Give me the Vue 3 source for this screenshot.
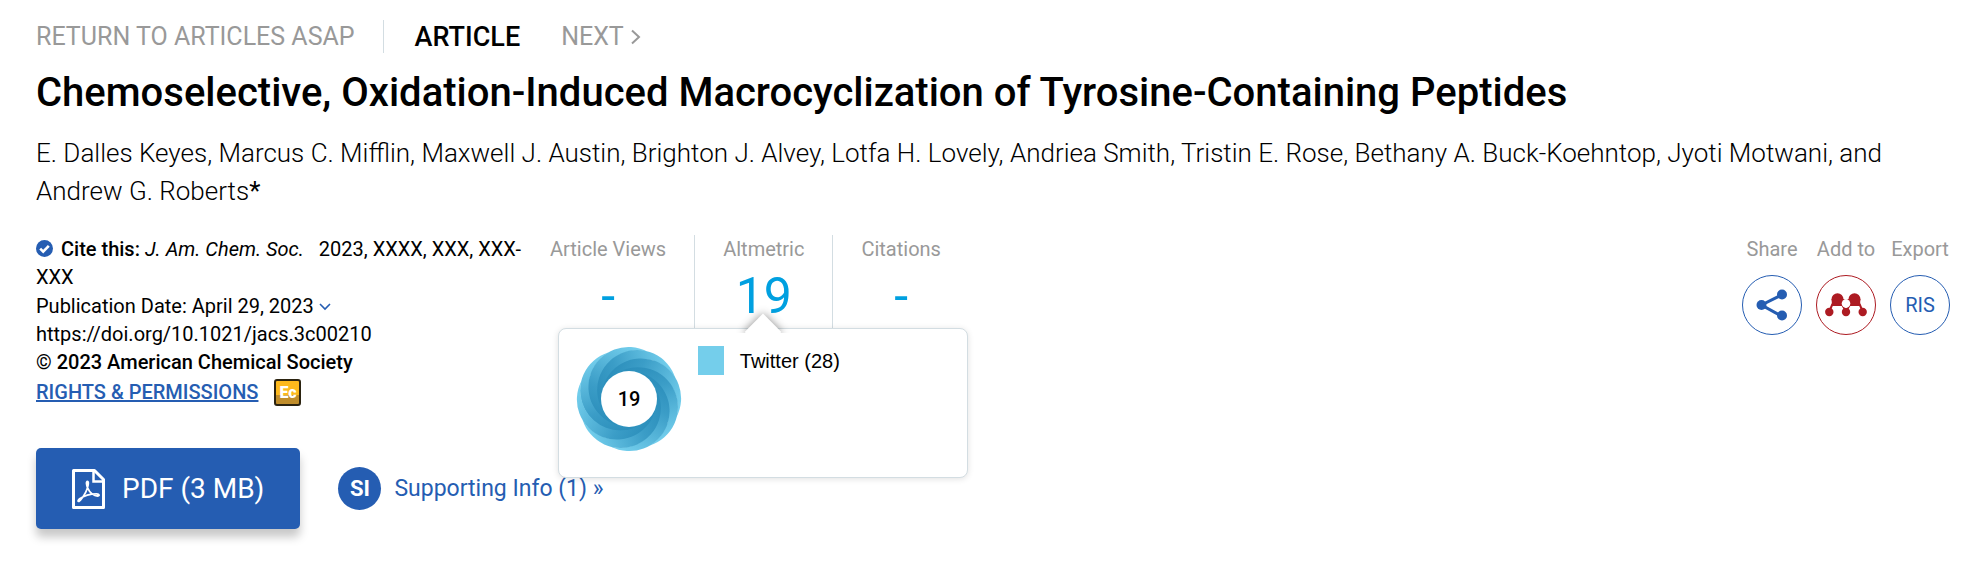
<script setup>
const authors = [
  'E. Dalles Keyes', 'Marcus C. Mifflin', 'Maxwell J. Austin', 'Brighton J. Alvey',
  'Lotfa H. Lovely', 'Andriea Smith', 'Tristin E. Rose', 'Bethany A. Buck-Koehntop',
  'Jyoti Motwani',
]
const petals = Array.from({ length: 8 }, (_, i) => 156 + i * 45)
</script>

<template>
  <main class="article">
    <nav class="crumbs" aria-label="Article navigation">
      <a href="#" class="crumb">RETURN TO ARTICLES ASAP</a>
      <span class="rule"></span>
      <span class="current">ARTICLE</span>
      <a href="#" class="crumb next">NEXT
        <svg width="12" height="16" viewBox="0 0 12 16" fill="none" stroke="currentColor" stroke-width="2" aria-hidden="true"><path d="M2 1.5 9 8l-7 6.5" /></svg>
      </a>
    </nav>

    <h1>Chemoselective, Oxidation-Induced Macrocyclization of Tyrosine-Containing Peptides</h1>

    <p class="authors">{{ authors.join(', ') }}, and Andrew G. Roberts<span class="star">*</span></p>

    <section class="meta">
      <div class="cite">
        <div class="citation">
          <svg class="check" width="17" height="17" viewBox="0 0 17 17" aria-hidden="true">
            <circle cx="8.5" cy="8.5" r="8.5" fill="#255db2" />
            <path d="m4.2 8.6 3 3 5.6-5.8" fill="none" stroke="#fff" stroke-width="2.6" />
          </svg>
          <b>Cite this:</b> <i>J. Am. Chem. Soc.</i> <span class="ref">2023, XXXX, XXX, XXX-XXX</span>
        </div>
        <div>Publication Date: April 29, 2023
          <svg width="12" height="12" viewBox="0 0 12 12" fill="none" stroke="#255db2" stroke-width="1.6" aria-hidden="true"><path d="m1 3 5 5 5-5" /></svg>
        </div>
        <div>https://doi.org/10.1021/jacs.3c00210</div>
        <div><b>© 2023 American Chemical Society</b></div>
        <div class="rights">
          <a href="#">RIGHTS &amp; PERMISSIONS</a>
          <span class="ec">Ec</span>
        </div>
      </div>

      <div class="stats">
        <div class="stat views">
          <span class="label">Article Views</span>
          <span class="value">-</span>
        </div>
        <div class="stat alt">
          <span class="label">Altmetric</span>
          <a href="#" class="value">19</a>
          <div class="popup">
            <span class="arrow"></span>
            <svg class="donut" width="106" height="106" viewBox="-53 -53 106 106" role="img" aria-label="Altmetric score 19">
              <defs>
                <linearGradient id="petal" gradientUnits="userSpaceOnUse" x1="10" y1="-32" x2="0" y2="50">
                  <stop offset="0" stop-color="#2a8dba" />
                  <stop offset="0.35" stop-color="#3b9dc7" />
                  <stop offset="1" stop-color="#74cfed" />
                </linearGradient>
              </defs>
              <circle r="42" fill="#3b9dc7" />
              <path
                v-for="angle in petals" :key="angle" fill="url(#petal)"
                :transform="`rotate(${angle})`"
                d="M0 -28.6A40 40 0 1 1 0 50.8A40 40 0 0 0 0 -28.6Z"
              />
              <circle r="28" fill="#fff" />
              <text x="0" y="7" text-anchor="middle">19</text>
            </svg>
            <div class="source"><span class="swatch"></span>Twitter (28)</div>
          </div>
        </div>
        <div class="stat">
          <span class="label">Citations</span>
          <span class="value">-</span>
        </div>
      </div>

      <div class="actions">
        <div class="action">
          <label for="share" class="label">Share</label>
          <button id="share" type="button" class="round">
            <svg width="32" height="32" viewBox="0 0 32 32" aria-hidden="true">
              <path d="M25.5 6 5.500 16l20 11" fill="none" stroke="#255db2" stroke-width="3" />
              <g fill="#255db2"><circle cx="5.500" cy="16" r="5" /><circle cx="26" cy="5.500" r="5" /><circle cx="26" cy="26.500" r="5" /></g>
            </svg>
          </button>
        </div>
        <div class="action">
          <label for="mendeley" class="label">Add to</label>
          <button id="mendeley" type="button" class="round red">
            <svg width="42" height="24" viewBox="0 0 42 24" aria-hidden="true">
              <g fill="#ad1b22">
                <circle cx="12.500" cy="6.300" r="6" /><circle cx="29.500" cy="6.300" r="6" />
                <path d="M6.800 6h11.500l2.700 1 2.700-1h11.500v7H6.800Z" />
                <path d="M7.500 11 4.500 18M34.500 11l3 7M17 11.500l4 7 4-7" fill="none" stroke="#ad1b22" stroke-width="2" />
                <circle cx="4.300" cy="19" r="4.200" /><circle cx="21" cy="19" r="4.200" /><circle cx="37.700" cy="19" r="4.200" />
              </g>
              <circle cx="21" cy="10.500" r="4.300" fill="#fff" />
            </svg>
          </button>
        </div>
        <div class="action">
          <label for="export" class="label">Export</label>
          <button id="export" type="button" class="round">RIS</button>
        </div>
      </div>
    </section>

    <section class="downloads">
      <button type="button" class="pdf">
        <svg width="33" height="40" viewBox="0 0 33 40" fill="none" stroke="#fff" aria-hidden="true">
          <path d="M1.500 1.500h21l9 9v28h-30Z" stroke-width="3" stroke-linejoin="round" />
          <path d="M21.500 2v10.500h10" stroke-width="2.500" />
          <path d="M15.500 12.500c-1.500 0-1.200 3 .2 6.500 2 5 6.500 8 9.800 8 2.400 0 2-2.200-.8-2.200-6 0-13 2-17 5-3 2.400-1.400 3.800.7 1.400 3.200-3.700 6.800-10 7.700-15 .4-2.500.2-3.700-.6-3.700Z" stroke-width="1.800" />
        </svg>
        PDF (3 MB)
      </button>
      <a href="#" class="si"><span class="badge">SI</span>Supporting Info (1) »</a>
    </section>
  </main>
</template>

<style>
body { background: #fff; }
</style>

<style scoped>
.article {
  padding: 20px 18px 48px 36px;
  font-family: Roboto, "Liberation Sans", sans-serif;
  font-size: 20px;
  line-height: 28px;
  color: #000;
}
a { text-decoration: none; }
b { font-weight: 500; }
.crumbs {
  display: flex;
  align-items: center;
  height: 33px;
  font-size: 25px;
  color: #999;
}
.crumb { color: inherit; }
.rule { align-self: stretch; width: 1px; margin: 0 31px 0 28px; background: #d3dde2; }
.current { font-size: 27px; font-weight: 500; color: #000; }
.next { margin-left: 41px; }
h1 { margin: 16px 0 17px; font-size: 40px; line-height: 48px; font-weight: 500; }
.authors { margin: 0 0 25px; font-size: 26px; line-height: 38px; font-weight: 300; }
.star { font-weight: 400; }
.meta { display: flex; align-items: stretch; }
.cite { flex: 0 1 492px; }
.citation { margin-bottom: 1px; }
.check { margin-right: 8px; vertical-align: -1px; }
.ref { margin-left: 10px; }
.rights { display: flex; align-items: center; gap: 16px; margin-top: 2px; }
.rights a { color: #255db2; font-weight: 500; text-decoration: underline; }
.ec {
  box-sizing: border-box;
  width: 27px;
  height: 27px;
  border: 2px solid #2b2310;
  border-radius: 3px;
  background: linear-gradient(#fdb91d 60%, #c08d2b 60%);
  color: #fff;
  font-size: 16px;
  line-height: 23px;
  font-weight: 900;
  text-align: center;
}
.stats { display: flex; }
.stat {
  display: flex;
  flex-direction: column;
  align-items: center;
  gap: 8px;
  padding: 0 28px;
}
.stat + .stat { border-left: 1px solid #d3dde2; }
.views { padding-left: 22px; }
.label { color: #999; }
.value { font-size: 50px; line-height: 50px; color: #00a0e0; }
.alt { position: relative; }
.popup {
  position: absolute;
  z-index: 2;
  top: 93px;
  left: 50%;
  box-sizing: border-box;
  width: 410px;
  height: 150px;
  margin-left: -206px;
  padding: 17px;
  display: flex;
  align-items: flex-start;
  gap: 16px;
  border: 1px solid #d3dde2;
  border-radius: 8px;
  background: #fff;
  box-shadow: 0 1px 6px rgba(0, 0, 0, 0.12);
}
.arrow {
  position: absolute;
  top: -28px;
  left: 50%;
  width: 60px;
  height: 32px;
  margin-left: -30px;
  overflow: hidden;
}
.arrow::before {
  content: "";
  position: absolute;
  left: 17px;
  top: 18px;
  width: 26px;
  height: 26px;
  background: #fff;
  transform: rotate(45deg);
  box-shadow: 0 0 10px rgba(0, 0, 0, 0.45);
}
.donut { flex: none; }
.donut text { font-size: 20px; font-weight: 500; }
.source {
  display: flex;
  align-items: center;
  gap: 16px;
  font-family: "Liberation Sans", Arial, sans-serif;
}
.swatch { width: 26px; height: 29px; background: #74ceeb; }
.actions { display: flex; gap: 14px; margin-left: auto; }
.action { display: flex; flex-direction: column; align-items: center; gap: 12px; width: 60px; }
.round {
  display: flex;
  align-items: center;
  justify-content: center;
  box-sizing: border-box;
  width: 60px;
  height: 60px;
  padding: 0;
  border: 1px solid #255db2;
  border-radius: 50%;
  background: #fff;
  color: #255db2;
  font: inherit;
}
.red { border-color: #ad1b22; }
.downloads { display: flex; align-items: center; gap: 38px; margin-top: 42px; }
.pdf {
  display: flex;
  align-items: center;
  gap: 17px;
  height: 81px;
  padding: 0 36px;
  border: 0;
  border-radius: 5px;
  background: #255db2;
  box-shadow: 0 8px 10px rgba(0, 0, 0, 0.22);
  color: #fff;
  font: 28px Roboto, "Liberation Sans", sans-serif;
}
.si { display: flex; align-items: center; gap: 13px; font-size: 23px; color: #255db2; }
.badge {
  width: 43px;
  height: 43px;
  border-radius: 50%;
  background: #255db2;
  color: #fff;
  font-size: 22px;
  line-height: 43px;
  font-weight: 700;
  text-align: center;
}
</style>
